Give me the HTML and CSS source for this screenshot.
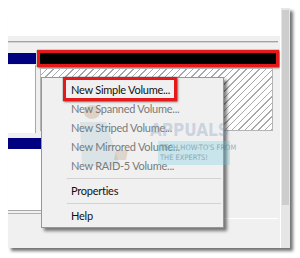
FILE: index.html
```html
<!DOCTYPE html>
<html>
<head>
<meta charset="utf-8">
<link rel="stylesheet" href="styles.css">
</head>
<body>
<div class="frame">
  <div class="main">
    <div class="top-pane"></div>
    <div class="hbar"></div>
    <div class="disk1">
      <div class="label">
        <div class="lbl-head"></div>
        <div class="lbl-body"></div>
      </div>
      <div class="parts">
        <div class="callout-bar"></div>
        <div class="hatch"></div>
      </div>
    </div>
    <div class="disk2">
      <div class="d2-left">
        <div class="d2-head"></div>
        <div class="d2-body"></div>
        <div class="d2-line"></div>
      </div>
      <div class="d2-right"></div>
    </div>
  </div>
  <div class="vscroll"><div class="thumb"></div></div>

  <div class="menu">
    <div class="item enabled">New Simple Volume...<span class="callout-item"></span></div>
    <div class="item disabled">New Spanned Volume...</div>
    <div class="item disabled">New Striped Volume...</div>
    <div class="item disabled">New Mirrored Volume...</div>
    <div class="item disabled">New RAID-5 Volume...</div>
    <div class="sep"></div>
    <div class="item enabled">Properties</div>
    <div class="sep"></div>
    <div class="item enabled">Help</div>
  </div>

  <div class="watermark">
    <svg class="wm-figure" width="90" height="80" viewBox="0 0 90 80">
      <ellipse cx="32" cy="24" rx="8" ry="7" fill="rgba(150,105,60,0.22)"/>
      <path d="M20 34 L46 34 L60 78 L22 78 Z" fill="rgba(70,150,170,0.13)"/>
      <path d="M56 62 L68 62 L66 72 L54 72 Z" fill="rgba(150,105,60,0.2)"/>
    </svg>
    <div class="wm-word">APPUALS</div>
    <div class="wm-tag">
      <span>TECH HOW-TO'S FROM</span>
      <span>THE EXPERTS!</span>
    </div>
  </div>
</div>
</body>
</html>
```

FILE: styles.css
```css
html, body {
  margin: 0;
  padding: 0;
  background: #ffffff;
  width: 300px;
  height: 258px;
  overflow: hidden;
}

.frame {
  position: relative;
  margin: 8px 0 0 8px;
  width: 282px;
  height: 240px;
  background: #f0f0f0;
  display: grid;
  grid-template-columns: 272px 10px;
  box-shadow: 3px 3px 3px rgba(0, 0, 0, 0.55);
}

.main {
  display: flex;
  flex-direction: column;
}

.top-pane {
  height: 28px;
  background: #ffffff;
}

.hbar {
  height: 0;
  margin: 5px 2px 7px 0;
  border-top: 1px solid #a3a3a3;
  border-bottom: 1px solid #d4d4d4;
}

.disk1 {
  display: flex;
  height: 84px;
}

.label {
  width: 28px;
  padding-top: 3px;
  margin-right: 1px;
}

.lbl-head {
  height: 11px;
  background: #000080;
}

.lbl-body {
  margin-top: 1px;
  width: 27px;
  height: 68px;
  background: #ffffff;
  border-right: 1px solid #a8a8a8;
}

.parts {
  width: 242px;
  display: flex;
  flex-direction: column;
}

.callout-bar {
  height: 11px;
  background: #000000;
  border: 3px solid #e41a1a;
  box-shadow: 0 0 1px rgba(0, 0, 0, 0.7), 1px 1px 2px rgba(0, 0, 0, 0.5);
}

.hatch {
  margin: 1px 6px 0 3px;
  height: 61px;
  border: 1px solid #b4b4b4;
  background: repeating-linear-gradient(135deg, #ffffff 0 3.6px, #a9a9a9 3.6px 4.7px);
}

.disk2 {
  display: flex;
  margin-top: 4px;
}

.d2-left {
  width: 202px;
}

.d2-head {
  height: 11px;
  background: #000080;
}

.d2-body {
  height: 61px;
  background: #ffffff;
  border-bottom: 1px solid #a8a8a8;
}

.d2-line {
  margin-top: 2px;
  height: 0;
  border-top: 1px solid #b0b0b0;
}

.d2-right {
  flex: 1;
  height: 80px;
  margin-right: 2px;
  border-bottom: 1px solid #ffffff;
}

.vscroll {
  background: #e6e6e6;
  border-left: 1px solid #ffffff;
}

.thumb {
  margin: 2px 1px 0 1px;
  height: 195px;
  background: #cdcdcd;
}

/* watermark (semi-transparent, lies over the menu as in the reference) */
.watermark {
  position: absolute;
  left: 52px;
  top: 80px;
  width: 180px;
  height: 90px;
  pointer-events: none;
}

.wm-figure {
  position: absolute;
  left: 0;
  top: 0;
}

.wm-word {
  position: absolute;
  left: 90px;
  top: 34px;
  font-family: "DejaVu Sans Condensed", "DejaVu Sans", sans-serif;
  font-weight: bold;
  font-size: 17px;
  line-height: 17px;
  color: rgba(120, 150, 185, 0.32);
}

.wm-tag {
  position: absolute;
  left: 98px;
  top: 53px;
  width: 72px;
  height: 24px;
  background: rgba(95, 200, 220, 0.28);
  display: flex;
  flex-direction: column;
  padding: 2px 0 0 2px;
  box-sizing: border-box;
  font-family: "DejaVu Sans Condensed", "DejaVu Sans", sans-serif;
  font-size: 7.5px;
  line-height: 10px;
  color: rgba(80, 100, 125, 0.5);
  white-space: nowrap;
}

/* context menu */
.menu {
  position: absolute;
  left: 33px;
  top: 69px;
  width: 177px;
  padding: 2px;
  background: #f0f0f0;
  border: 1px solid #979797;
  box-shadow: 3px 3px 3px rgba(0, 0, 0, 0.5);
  font-family: Lato, "Noto Sans", sans-serif;
  font-size: 11px;
  letter-spacing: -0.25px;
}

.item {
  position: relative;
  height: 19px;
  line-height: 19px;
  padding-left: 27px;
  white-space: nowrap;
}

.enabled {
  color: #111111;
}

.disabled {
  color: #7a7a7a;
}

.sep {
  height: 6px;
  margin-left: 23px;
  display: flex;
  align-items: center;
}

.sep::before {
  content: "";
  flex: 1;
  height: 1px;
  background: #d2d2d2;
}

.callout-item {
  position: absolute;
  left: 19px;
  top: -3px;
  width: 108px;
  height: 18px;
  border: 3px solid #e41a1a;
  box-shadow: 0 0 1px rgba(0, 0, 0, 0.7), 1px 1px 2px rgba(0, 0, 0, 0.5);
}
```
